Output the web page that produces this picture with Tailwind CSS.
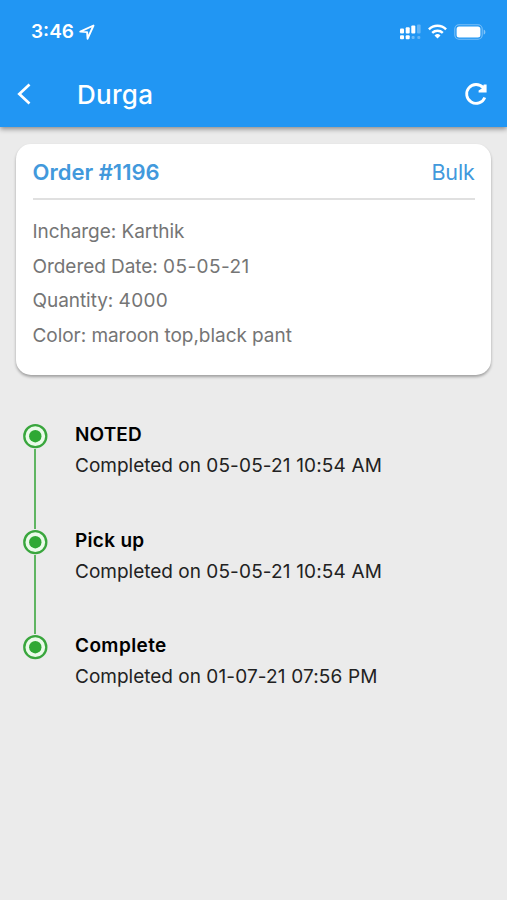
<!DOCTYPE html>
<html lang="en">
<head>
<meta charset="utf-8">
<meta name="viewport" content="width=device-width, initial-scale=1">
<title>Durga</title>
<script src="https://cdn.jsdelivr.net/npm/@tailwindcss/browser@4"></script>
</head>
<body class="h-[900px] w-[507px] overflow-hidden bg-[#ebebeb] font-['Inter','Liberation_Sans',sans-serif]">
<header class="relative h-[127px] bg-[#2196f3] text-white shadow-[0_2px_5px_rgba(0,0,0,0.42)]">
  <div class="flex h-[63px] items-center pl-[31px] pr-[21px]">
    <span class="text-[19px] font-semibold leading-6">3:46</span>
    <svg class="ml-[5px]" width="16" height="16" viewBox="0 0 16 16" fill="none" stroke="#fff" stroke-width="1.9" stroke-linejoin="round"><path d="M14.5 1.5 1.3 7.6 8.1 8.1 8.6 14.7Z"/></svg>
    <svg class="ml-auto" width="22" height="16" viewBox="0 0 22 16" fill="#fff">
      <rect x="1" y="4.5" width="4" height="5" rx="1"/><rect x="6.7" y="3.2" width="4" height="6.3" rx="1"/><rect x="12.3" y="1.5" width="4" height="8" rx="1"/><rect x="18" y="0.5" width="3.6" height="9" rx="1" opacity=".3"/>
      <rect x="1" y="11.3" width="4" height="4" rx="1"/><rect x="6.7" y="11.3" width="4" height="4" rx="1"/><rect x="12.6" y="12" width="3" height="3" rx="1" opacity=".35"/><rect x="18.3" y="12" width="3" height="3" rx="1" opacity=".3"/>
    </svg>
    <svg class="ml-[7px]" width="19" height="15" viewBox="0 0 19 15" fill="none" stroke="#fff" stroke-width="2.4"><path d="M.9 5.3a12.2 12.2 0 0 1 17.2 0M4.2 8.9a7.6 7.6 0 0 1 10.6 0"/><path d="M9.5 14.4 6.5 11.5a4.3 4.3 0 0 1 6 0Z" fill="#fff" stroke="none"/></svg>
    <svg class="ml-[7px]" width="32" height="16" viewBox="0 0 32 16"><rect x=".8" y=".8" width="27.4" height="14.4" rx="4.2" fill="none" stroke="#fff" stroke-opacity=".4" stroke-width="1.1"/><rect x="2.6" y="2.6" width="23.8" height="10.8" rx="2.5" fill="#fff"/><path d="M29.7 5.4c2.2.8 2.2 4.4 0 5.2Z" fill="#fff" fill-opacity=".45"/></svg>
  </div>
  <div class="flex h-[62px] items-center pl-[16px] pr-[19px]">
    <svg width="16" height="24" viewBox="0 0 16 24" fill="none" stroke="#fff" stroke-width="2.7"><path d="M13.5 2.5 3.3 12l10.2 9.5"/></svg>
    <h1 class="ml-[45px] pt-px text-[26px] font-medium leading-8 tracking-[0.3px]">Durga</h1>
    <svg class="ml-auto" width="24" height="24" viewBox="0 0 24 24" fill="none" stroke="#fff" stroke-width="2.8"><path d="M20.8 15.4a9.4 9.4 0 1 1-1.6-9.6"/><path d="M22.6 2.4v8.2H14.6V8.4l3.2-1.8 2-4.2Z" fill="#fff" stroke="none"/></svg>
  </div>
</header>
<main>
  <section class="mx-4 mt-[17px] h-[231px] rounded-[15px] bg-white px-[16.5px] shadow-[0_2px_3px_rgba(0,0,0,0.32)]">
    <div class="flex h-[56px] items-center justify-between border-b-2 border-[#e0e0e0] pt-[2px] text-[22px] leading-7 text-[#4299dc]">
      <h2 class="font-semibold">Order #1196</h2>
      <span class="text-[21.5px] tracking-[-0.2px]">Bulk</span>
    </div>
    <div class="pt-[15px] text-[19px] leading-[34.7px] tracking-[-0.05px] text-[#757575]">
      <p>Incharge: Karthik</p>
      <p>Ordered Date: <span class="tracking-[0.4px]">05-05-21</span></p>
      <p>Quantity: <span class="tracking-[0.3px]">4000</span></p>
      <p>Color: maroon top,black pant</p>
    </div>
  </section>
  <ol class="mt-[48px] pl-[22px] text-[19px] text-[#222]">
    <li class="flex h-[105.5px]">
      <div class="flex w-[26px] flex-col items-center"><svg class="shrink-0" width="26" height="26" viewBox="0 0 26 26"><circle cx="13.3" cy="13.2" r="11" fill="#eafbe9" stroke="#39a63d" stroke-width="2.3"/><circle cx="13.3" cy="13.2" r="6.2" fill="#2fa834"/></svg><i class="w-[2px] flex-1 bg-[#5fb562]"></i></div>
      <div class="ml-[27px] pt-[1px]"><h3 class="font-semibold leading-[22px] tracking-[0.1px] text-black">NOTED</h3><p class="mt-[8px] leading-6">Completed on <span class="tracking-[0.15px]">05-05-21 10:54 AM</span></p></div>
    </li>
    <li class="flex h-[105.5px]">
      <div class="flex w-[26px] flex-col items-center"><svg class="shrink-0" width="26" height="26" viewBox="0 0 26 26"><circle cx="13.3" cy="13.2" r="11" fill="#eafbe9" stroke="#39a63d" stroke-width="2.3"/><circle cx="13.3" cy="13.2" r="6.2" fill="#2fa834"/></svg><i class="w-[2px] flex-1 bg-[#5fb562]"></i></div>
      <div class="ml-[27px] pt-[1px]"><h3 class="font-semibold leading-[22px] tracking-[0.3px] text-black">Pick up</h3><p class="mt-[8px] leading-6">Completed on <span class="tracking-[0.15px]">05-05-21 10:54 AM</span></p></div>
    </li>
    <li class="flex h-[105.5px]">
      <div class="flex w-[26px] flex-col items-center"><svg class="shrink-0" width="26" height="26" viewBox="0 0 26 26"><circle cx="13.3" cy="13.2" r="11" fill="#eafbe9" stroke="#39a63d" stroke-width="2.3"/><circle cx="13.3" cy="13.2" r="6.2" fill="#2fa834"/></svg></div>
      <div class="ml-[27px] pt-[1px]"><h3 class="font-semibold leading-[22px] tracking-[0.4px] text-black">Complete</h3><p class="mt-[8px] leading-6">Completed on <span class="tracking-[0.15px]">01-07-21 07:56 PM</span></p></div>
    </li>
  </ol>
</main>
</body>
</html>
